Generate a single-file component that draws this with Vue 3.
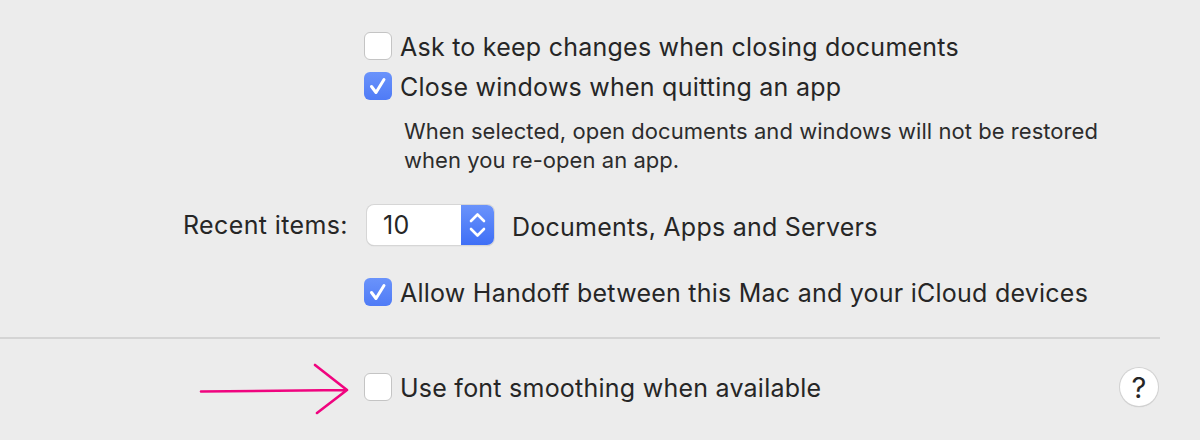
<script setup>
const topOptions = [
  { label: "Ask to keep changes when closing documents", checked: false },
  { label: "Close windows when quitting an app", checked: true },
];
</script>

<template>
  <div class="prefs">
    <section class="options">
      <label v-for="opt in topOptions" :key="opt.label" class="row check-row">
        <span class="box" :class="{ on: opt.checked }">
          <svg v-if="opt.checked" viewBox="0 0 28 28" width="28" height="28">
            <path d="M7.5 14.5 L12 20.5 L20 7.5" fill="none" stroke="#fff" stroke-width="3" stroke-linecap="round" stroke-linejoin="round" />
          </svg>
        </span>
        <span class="check-text">{{ opt.label }}</span>
      </label>
      <p class="hint">
        When selected, open documents and windows will not be restored<br />
        when you re-open an app.
      </p>
    </section>

    <div class="row recent">
      <span class="recent-label">Recent items:</span>
      <div class="stepper">
        <span class="stepper-value">10</span>
        <span class="stepper-arrows">
          <svg viewBox="0 0 33 40" width="33" height="40">
            <path d="M10 16 L16.5 9.5 L23 16 M10 24 L16.5 30.5 L23 24" fill="none" stroke="#fff" stroke-width="2.6" stroke-linecap="round" stroke-linejoin="round" />
          </svg>
        </span>
      </div>
      <span class="recent-after">Documents, Apps and Servers</span>
    </div>

    <label class="row check-row handoff">
      <span class="box on">
        <svg viewBox="0 0 28 28" width="28" height="28">
          <path d="M7.5 14.5 L12 20.5 L20 7.5" fill="none" stroke="#fff" stroke-width="3" stroke-linecap="round" stroke-linejoin="round" />
        </svg>
      </span>
      <span class="check-text">Allow Handoff between this Mac and your iCloud devices</span>
    </label>

    <hr class="divider" />

    <div class="footer">
      <label class="row check-row">
        <span class="box"></span>
        <span class="check-text">Use font smoothing when available</span>
      </label>
      <button class="help">?</button>
      <svg class="arrow" viewBox="0 0 160 60" width="160" height="60">
        <path d="M1 10.5 Q75 10 147 9 M115 -16 L147 9 L117 32" transform="translate(0 20)" fill="none" stroke="#f0047f" stroke-width="2.6" stroke-linecap="round" stroke-linejoin="round" />
      </svg>
    </div>
  </div>
</template>

<style>
html,
body {
  margin: 0;
  background: #ececec;
}
</style>

<style scoped>
.prefs {
  width: 1200px;
  height: 440px;
  overflow: hidden;
  background: #ececec;
  color: #262626;
  font-family: Inter, "Liberation Sans", sans-serif;
  font-size: 25px;
  letter-spacing: 0.24px;
  box-sizing: border-box;
  padding-top: 32px;
}

.options {
  padding-left: 364px;
}

.row {
  display: flex;
  align-items: center;
}

.check-row {
  gap: 8px;
  height: 28px;
}

.check-text {
  padding-top: 2px;
}

.check-row + .check-row {
  margin-top: 12px;
}

.box {
  width: 28px;
  height: 28px;
  box-sizing: border-box;
  flex: none;
  border-radius: 6px;
  background: #fff;
  border: 1px solid #c4c4c4;
}

.box.on {
  background: linear-gradient(#6a93fb, #4f7bf6);
  border: none;
}

.box svg {
  display: block;
}

.hint {
  margin: 17px 0 0 40px;
  font-size: 22px;
  letter-spacing: 0.05px;
  line-height: 29px;
  color: #2c2c2c;
}

.recent {
  margin-top: 30px;
  padding-left: 183px;
}

.recent-label {
  width: 184px;
  letter-spacing: 0.37px;
}

.stepper {
  width: 127px;
  height: 40px;
  display: flex;
  border-radius: 7px;
  background: #fff;
  box-shadow: 0 0 0 1px #d6d6d6, 0 1px 1px #b5b5b5;
  overflow: hidden;
}

.stepper-value {
  flex: 1;
  padding-left: 16px;
  line-height: 40px;
}

.stepper-arrows {
  width: 33px;
  background: linear-gradient(#6a93fb, #3f6ff6);
}

.stepper-arrows svg {
  display: block;
}

.recent-after {
  margin-left: 18px;
  padding-top: 4px;
}

.handoff {
  margin-top: 33px;
  margin-left: 364px;
}

.divider {
  margin: 31px 0 0;
  width: 1160px;
  height: 2px;
  border: none;
  background: #d4d4d4;
}

.footer {
  position: relative;
  display: flex;
  align-items: center;
  justify-content: space-between;
  padding: 29px 42px 0 364px;
}

.help {
  width: 38px;
  height: 38px;
  padding: 0;
  border: none;
  border-radius: 50%;
  background: #fff;
  box-shadow: 0 0 0 1px #d2d2d2, 0 1px 1px #b5b5b5;
  color: #262626;
  font-family: inherit;
  font-size: 29px;
  font-weight: 400;
}

.arrow {
  position: absolute;
  left: 200px;
  top: 22px;
  overflow: visible;
}
</style>
